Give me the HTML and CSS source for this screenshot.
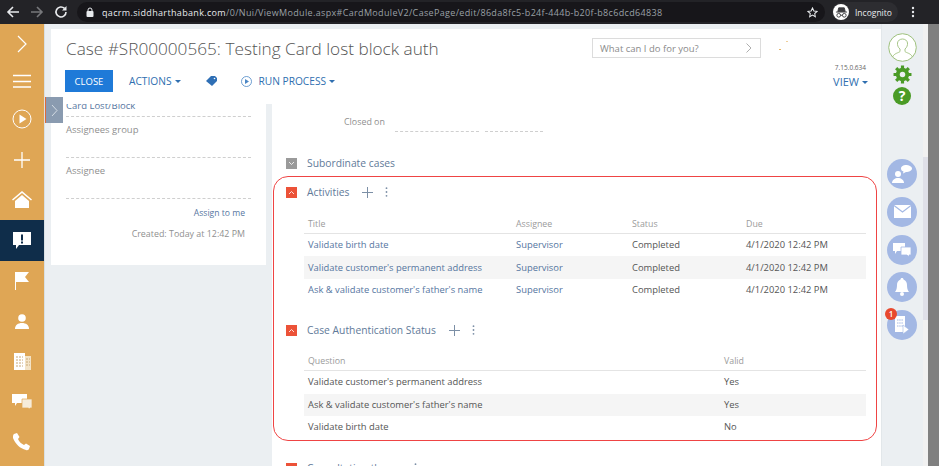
FILE: index.html
```html
<!DOCTYPE html>
<html lang="en">
<head>
    <meta charset="UTF-8">
    <meta name="viewport" content="width=device-width, initial-scale=1.0">
    <title>Case #SR00000565</title>
    <link rel="stylesheet" href="styles.css">
</head>
<body>
    <div class="browser-bar">
        <svg class="bar-icon" width="14" height="14" viewBox="0 0 14 14"><path d="M13 7H2M7 2 2 7l5 5" fill="none" stroke="#e8eaed" stroke-width="1.6"/></svg>
        <svg class="bar-icon" width="14" height="14" viewBox="0 0 14 14"><path d="M1 7h11M7 2l5 5-5 5" fill="none" stroke="#77787b" stroke-width="1.6"/></svg>
        <svg class="bar-icon" width="14" height="14" viewBox="0 0 14 14"><path d="M12 7a5 5 0 1 1-1.5-3.6" fill="none" stroke="#e8eaed" stroke-width="1.6"/><path d="M12.5 1v4.5H8z" fill="#e8eaed"/></svg>
        <div class="url-pill">
            <svg width="8" height="10" viewBox="0 0 8 10"><rect x="0.5" y="4" width="7" height="6" rx="1" fill="#e8eaed"/><path d="M2 4.5V3a2 2 0 0 1 4 0v1.5" fill="none" stroke="#e8eaed"/></svg>
            <span class="url-text"><b>qacrm.siddharthabank.com</b>/0/Nui/ViewModule.aspx#CardModuleV2/CasePage/edit/86da8fc5-b24f-444b-b20f-b8c6dcd64838</span>
            <svg class="url-star" width="11" height="11" viewBox="0 0 12 12"><path d="M6 1l1.5 3.3 3.5.4-2.6 2.4.7 3.5L6 8.8 2.9 10.6l.7-3.5L1 4.7l3.5-.4z" fill="none" stroke="#e8eaed" stroke-width="1.1"/></svg>
        </div>
        <div class="incognito">
            <span class="incognito-badge">
                <svg width="13" height="13" viewBox="0 0 14 14"><path d="M3 6l1-4h6l1 4zM1 6.5h12" fill="#3c3c40" stroke="#3c3c40"/><circle cx="4" cy="10" r="2" fill="none" stroke="#3c3c40"/><circle cx="10" cy="10" r="2" fill="none" stroke="#3c3c40"/><path d="M6 10h2" stroke="#3c3c40"/></svg>
            </span>
            <span>Incognito</span>
        </div>
        <svg class="bar-dots" width="4" height="12" viewBox="0 0 4 12"><circle cx="2" cy="2" r="1.2" fill="#e8eaed"/><circle cx="2" cy="6" r="1.2" fill="#e8eaed"/><circle cx="2" cy="10" r="1.2" fill="#e8eaed"/></svg>
    </div>

    <div class="app">
        <nav class="sidebar">
            <div class="nav-item nav-top">
                <svg width="12" height="18" viewBox="0 0 12 18"><path d="M2 1l8 8-8 8" fill="none" stroke="#fff" stroke-width="1.2"/></svg>
            </div>
            <div class="nav-item nav-menu">
                <svg width="18" height="14" viewBox="0 0 18 14"><path d="M0 1.5h18M0 7.5h18M0 13h18" stroke="#fff" stroke-width="1.3"/></svg>
            </div>
            <div class="nav-item">
                <svg width="20" height="20" viewBox="0 0 20 20"><circle cx="10" cy="10" r="9" fill="none" stroke="#fff" stroke-width="1"/><path d="M7.5 5.5l7 4.5-7 4.5z" fill="#fff"/></svg>
            </div>
            <div class="nav-item">
                <svg width="16" height="16" viewBox="0 0 16 16"><path d="M8 0v16M0 8h16" stroke="#fff" stroke-width="1.3"/></svg>
            </div>
            <div class="nav-item">
                <svg width="20" height="17" viewBox="0 0 20 17"><path d="M0 8.5 10 0l10 8.5-1 1L10 2 1 9.5z" fill="#fff"/><path d="M3 10l7-6 7 6v7H3z" fill="#fff"/></svg>
            </div>
            <div class="nav-item is-active">
                <svg width="18" height="17" viewBox="0 0 18 17"><path d="M0 0h18v13H6l-3 4v-4H0z" fill="#fff"/><path d="M8 2.5h2v6H8zM8 9.5h2v2H8z" fill="#0f2d4a"/></svg>
            </div>
            <div class="nav-item">
                <svg width="14" height="18" viewBox="0 0 14 18"><path d="M0 0h14l-4 5 4 5H1v8H0z" fill="#fff"/></svg>
            </div>
            <div class="nav-item">
                <svg width="14" height="15" viewBox="0 0 14 15"><circle cx="7" cy="4" r="3.8" fill="#fff"/><path d="M0 15c0-4 3-6 7-6s7 2 7 6z" fill="#fff"/></svg>
            </div>
            <div class="nav-item">
                <svg width="17" height="17" viewBox="0 0 17 17"><path d="M0 0h11v17H0z" fill="#fff"/><path d="M11 3h6v14h-6z" fill="#f3e3c6"/><path d="M2 4h7M2 7h7M2 10h7M2 13h7M12 6h4M12 9h4M12 12h4" stroke="#c9a877" stroke-dasharray="2 1"/></svg>
            </div>
            <div class="nav-item">
                <svg width="20" height="15" viewBox="0 0 20 15"><path d="M0 0h15v9H5l-2 3V9H0z" fill="#fff"/><path d="M10 5h10v9h-2v1l-2-1h-6z" fill="#f6ecda" stroke="#dfa655" stroke-width=".7"/></svg>
            </div>
            <div class="nav-item">
                <svg width="18" height="18" viewBox="0 0 18 18"><path d="M1 1l3-1 2.5 4-1.5 2c1 2.5 3 4.5 6 6l2-1.5 4 2.5-1 3c-.5 1-1.5 1.500-3 1C7 15.5 2.5 11 0 5c-.3-2 .2-3.300 1-4z" fill="#fff"/></svg>
            </div>
        </nav>

        <div class="main">
            <header class="page-head">
                <div class="title-row">
                    <h1 class="page-title">Case #SR00000565: Testing Card lost block auth</h1>
                    <div class="search-box">
                        <span>What can I do for you?</span>
                        <svg width="6" height="10" viewBox="0 0 6 10"><path d="M.5.5 5 5 .5 9.5" fill="none" stroke="#999" stroke-width=".8"/></svg>
                    </div>
                    <div class="spark"></div>
                </div>
                <div class="action-row">
                    <button class="btn-close">CLOSE</button>
                    <span class="action-link action-actions">ACTIONS<i class="caret"></i></span>
                    <svg class="tag-icon" width="11" height="10" viewBox="0 0 11 10"><path d="M0 5 5 0h4l2 2v3L6 10z" fill="#2f6fb5"/><circle cx="8.5" cy="2.5" r=".8" fill="#fff"/></svg>
                    <svg class="play-icon" width="11" height="11" viewBox="0 0 11 11"><circle cx="5.5" cy="5.5" r="5" fill="none" stroke="#4a86c5" stroke-width=".8"/><path d="M4 3l4 2.5L4 8z" fill="#4a86c5"/></svg>
                    <span class="action-link">RUN PROCESS<i class="caret"></i></span>
                    <div class="view-block">
                        <span class="version">7.15.0.634</span>
                        <span class="action-link view-link">VIEW<i class="caret"></i></span>
                    </div>
                </div>
            </header>

            <div class="content">
                <aside class="side-panel">
                    <div class="side-field side-first"><a class="link">Card Lost/Block</a></div>
                    <div class="side-field"><span class="label">Assignees group</span></div>
                    <div class="side-field"><span class="label">Assignee</span></div>
                    <a class="link assign-link">Assign to me</a>
                    <span class="created">Created: Today at 12:42 PM</span>
                </aside>

                <section class="record">
                    <div class="closed-row">
                        <span class="label">Closed on</span>
                        <span class="date-line date-long"></span>
                        <span class="date-line date-short"></span>
                    </div>
                    <div class="detail-head sub-head">
                        <span class="toggle is-grey"><svg width="7" height="5" viewBox="0 0 7 5"><path d="M1 1l2.5 2.5L6 1" fill="none" stroke="#fff" stroke-width=".8"/></svg></span>
                        <span class="detail-title">Subordinate cases</span>
                    </div>

                    <div class="marked-box">
                        <div class="detail-head">
                            <span class="toggle"><svg width="7" height="5" viewBox="0 0 7 5"><path d="M1 4l2.5-2.5L6 4" fill="none" stroke="#fff" stroke-width=".8"/></svg></span>
                            <span class="detail-title">Activities</span>
                            <svg class="add-icon" width="11" height="11" viewBox="0 0 11 11"><path d="M5.5 0v11M0 5.5h11" stroke="#7c8fa6"/></svg>
                            <svg class="more-icon" width="3" height="10" viewBox="0 0 3 10"><circle cx="1.5" cy="1.2" r=".9" fill="#7c8fa6"/><circle cx="1.5" cy="5" r=".9" fill="#7c8fa6"/><circle cx="1.5" cy="8.8" r=".9" fill="#7c8fa6"/></svg>
                        </div>
                        <div class="grid grid-activities">
                            <div class="grid-row grid-header"><span>Title</span><span>Assignee</span><span>Status</span><span>Due</span></div>
                            <div class="grid-row"><a class="link">Validate birth date</a><a class="link">Supervisor</a><span>Completed</span><span>4/1/2020 12:42 PM</span></div>
                            <div class="grid-row"><a class="link">Validate customer's permanent address</a><a class="link">Supervisor</a><span>Completed</span><span>4/1/2020 12:42 PM</span></div>
                            <div class="grid-row"><a class="link">Ask &amp; validate customer's father's name</a><a class="link">Supervisor</a><span>Completed</span><span>4/1/2020 12:42 PM</span></div>
                        </div>

                        <div class="detail-head auth-head">
                            <span class="toggle"><svg width="7" height="5" viewBox="0 0 7 5"><path d="M1 4l2.5-2.5L6 4" fill="none" stroke="#fff" stroke-width=".8"/></svg></span>
                            <span class="detail-title">Case Authentication Status</span>
                            <svg class="add-icon" width="11" height="11" viewBox="0 0 11 11"><path d="M5.5 0v11M0 5.5h11" stroke="#7c8fa6"/></svg>
                            <svg class="more-icon" width="3" height="10" viewBox="0 0 3 10"><circle cx="1.5" cy="1.2" r=".9" fill="#7c8fa6"/><circle cx="1.5" cy="5" r=".9" fill="#7c8fa6"/><circle cx="1.5" cy="8.8" r=".9" fill="#7c8fa6"/></svg>
                        </div>
                        <div class="grid grid-auth">
                            <div class="grid-row grid-header"><span>Question</span><span>Valid</span></div>
                            <div class="grid-row"><span>Validate customer's permanent address</span><span>Yes</span></div>
                            <div class="grid-row"><span>Ask &amp; validate customer's father's name</span><span>Yes</span></div>
                            <div class="grid-row"><span>Validate birth date</span><span>No</span></div>
                        </div>
                    </div>

                    <div class="detail-head consult-head">
                        <span class="toggle"></span>
                        <span class="detail-title">Consultation theme</span>
                        <svg class="more-icon" width="3" height="10" viewBox="0 0 3 10"><circle cx="1.5" cy="1.2" r=".9" fill="#7c8fa6"/><circle cx="1.5" cy="5" r=".9" fill="#7c8fa6"/></svg>
                    </div>
                </section>
            </div>

            <div class="panel-tab">
                <svg width="7" height="13" viewBox="0 0 7 13"><path d="M1 1l5 5.5L1 12" fill="none" stroke="#e6ebf0" stroke-width=".8"/></svg>
            </div>
        </div>

        <aside class="rail">
            <div class="rail-top">
                <svg width="29" height="29" viewBox="0 0 29 29"><circle cx="14.5" cy="14.5" r="13.8" fill="#fff" stroke="#9dc07c"/><path d="M4.5 24c2-4 6-4 7.5-5.5v-2.5c-2-1.5-2.700-4-2.500-6 .3-2.500 2.500-4 5-4s4.700 1.500 5 4c.2 2-.5 4.500-2.500 6v2.500c1.500 1.500 5.500 1.500 7.500 5.500" fill="none" stroke="#9dc07c" stroke-width=".9"/></svg>
                <svg class="gear" width="19" height="19" viewBox="0 0 18 18"><circle cx="9" cy="9" r="4.5" fill="none" stroke="#4a9b26" stroke-width="3.6"/><path d="M9 .5v17M.5 9h17M3 3l12 12M15 3 3 15" stroke="#4a9b26" stroke-width="3"/><circle cx="9" cy="9" r="2.6" fill="#ebeff2"/></svg>
                <span class="help">?</span>
            </div>
            <div class="rail-actions">
                <span class="rail-btn">
                    <svg width="20" height="19" viewBox="0 0 20 19"><circle cx="6" cy="9" r="3" fill="#fff"/><path d="M0 18c0-3 3-5 6-5s6 2 6 5z" fill="#fff"/><path d="M9 3.5C9 1.5 11.5 0 14 0s6 1.5 6 3.5S17 7 14 7l-3 1.5.5-2C10 6 9 5 9 3.5z" fill="#fff"/></svg>
                </span>
                <span class="rail-btn">
                    <svg width="17" height="13" viewBox="0 0 17 13"><rect width="17" height="13" fill="#fff"/><path d="M0 .5 8.5 7 17 .5" fill="none" stroke="#a3b8e4" stroke-width="1.2"/></svg>
                </span>
                <span class="rail-btn">
                    <svg width="18" height="14" viewBox="0 0 18 14"><path d="M0 0h12v8H4l-2 3V8H0z" fill="#fff"/><path d="M8 4h10v8h-2v2l-2-2H8z" fill="#fff" stroke="#a3b8e4" stroke-width=".8"/></svg>
                </span>
                <span class="rail-btn">
                    <svg width="14" height="18" viewBox="0 0 14 18"><path d="M7 0c1 0 1.5.7 1.5 1.5C11 2.5 12 4.500 12 7c0 3 .5 5 2 7H0c1.500-2 2-4 2-7 0-2.500 1-4.500 3.500-5.500C5.500.7 6 0 7 0z" fill="#fff"/><circle cx="7" cy="16" r="2" fill="#fff"/></svg>
                </span>
                <span class="rail-btn">
                    <svg width="14" height="18" viewBox="0 0 14 18"><path d="M0 0h10v16H0z" fill="#fff"/><path d="M2 4h6M2 7h6M2 10h6" stroke="#a3b8e4" stroke-dasharray="1.5 .7"/><path d="M8 9l6 4.5L8 18z" fill="#fff" stroke="#a3b8e4" stroke-width=".6"/></svg>
                    <span class="badge">1</span>
                </span>
            </div>
        </aside>

        <div class="scroll-track"><div class="scroll-thumb"></div></div>
        <div class="gutter"></div>
    </div>
</body>
</html>
```

FILE: styles.css
```css
* {
    margin: 0;
    padding: 0;
    box-sizing: border-box;
    font-family: 'Open Sans', 'Liberation Sans', sans-serif;
}

body {
    width: 939px;
    height: 466px;
    overflow: hidden;
    background-color: #ebeff2;
}

/* browser chrome */
.browser-bar {
    height: 24px;
    background-color: #232327;
    display: flex;
    align-items: center;
    padding-left: 6px;
    gap: 6px;
    color: #e8eaed;
}

.bar-icon {
    flex: none;
}

.bar-icon + .bar-icon {
    margin-left: 4px;
}

.url-pill {
    margin-left: 3px;
    width: 748px;
    height: 20px;
    border-radius: 10px;
    background-color: #17161a;
    display: flex;
    align-items: center;
    padding-left: 9px;
    gap: 8px;
    font-size: 9px;
}

.url-text {
    color: #9aa0a6;
    letter-spacing: 0.34px;
    white-space: nowrap;
}

.url-text b {
    color: #e8eaed;
    font-weight: 400;
}

.url-star {
    margin-left: auto;
    margin-right: 7px;
}

.incognito {
    margin-left: 1px;
    width: 66px;
    height: 20px;
    padding-left: 1px;
    border-radius: 10px;
    background-color: #2d2d31;
    display: flex;
    align-items: center;
    gap: 6px;
    font-size: 8.5px;
}

.incognito-badge {
    width: 16px;
    height: 16px;
    border-radius: 50%;
    background-color: #fff;
    display: flex;
    align-items: center;
    justify-content: center;
}

.bar-dots {
    margin-left: 7px;
}

/* app frame */
.app {
    height: 442px;
    display: flex;
}

.sidebar {
    width: 45px;
    flex: none;
    background-color: #dfa655;
    border-right: 1px solid #d9e0e3;
}

.nav-item {
    height: 40.4px;
    display: flex;
    align-items: center;
    justify-content: center;
}

.nav-top {
    height: 39px;
}

.nav-menu {
    height: 36px;
}

.is-active {
    background-color: #0f2d4a;
}

.main {
    position: relative;
    width: 836px;
    flex: none;
    padding: 5px 0 0 6px;
    background-color: #ebeff2;
}

.page-head {
    height: 75px;
    background-color: #fff;
    padding-left: 14px;
}

.title-row {
    height: 36px;
    display: flex;
    align-items: flex-end;
    position: relative;
}

.page-title {
    width: 527px;
    margin-bottom: 3px;
    padding-left: 1px;
    font-size: 17.2px;
    font-weight: 300;
    color: #555;
    line-height: 26px;
    white-space: nowrap;
}

.search-box {
    width: 169px;
    height: 20px;
    margin-bottom: 7px;
    border: 1px solid #dcdcdc;
    display: flex;
    align-items: center;
    justify-content: space-between;
    padding: 0 8px 0 7px;
    font-size: 9.5px;
    color: #8a8a8a;
}

.spark {
    position: absolute;
    left: 714px;
    top: 20px;
    width: 2px;
    height: 1px;
    background-color: #e7b466;
    box-shadow: 7px -8px 0 #f0cf9a;
}

.action-row {
    display: flex;
    align-items: center;
    height: 22px;
    margin-top: 5px;
    padding-right: 13px;
}

.btn-close {
    width: 48px;
    height: 22px;
    border: none;
    background-color: #1f7ad8;
    color: #fff;
    font-size: 9.5px;
}

.action-link {
    color: #2f6fb0;
    font-size: 10.2px;
    white-space: nowrap;
}

.action-actions {
    margin-left: 16px;
}

.caret {
    display: inline-block;
    margin-left: 3px;
    vertical-align: 2px;
    border-left: 3.5px solid transparent;
    border-right: 3.5px solid transparent;
    border-top: 3.5px solid #2f6fb0;
}

.tag-icon {
    margin-left: 25px;
}

.play-icon {
    margin-left: 24px;
    margin-right: 7px;
}

.view-block {
    margin-left: auto;
    position: relative;
    display: flex;
    align-items: center;
}

.version {
    position: absolute;
    right: 2px;
    top: -11px;
    font-size: 6.5px;
    color: #666;
    white-space: nowrap;
}

.view-link {
    font-size: 11px;
}

.content {
    display: flex;
    gap: 6px;
    height: 362px;
}

.side-panel {
    width: 215px;
    height: 161px;
    background-color: #fff;
    overflow: hidden;
    padding: 0 15px;
    display: flex;
    flex-direction: column;
    font-size: 9.5px;
}

.side-field {
    height: 41px;
    flex: none;
    border-bottom: 1px dashed #cfcfcf;
    padding-top: 6px;
    line-height: 14px;
}

.side-first {
    height: 13px;
    padding-top: 0;
    line-height: 10px;
}

.side-first .link {
    display: block;
    margin-top: -3px;
}

.label {
    color: #8f8f8f;
}

.link {
    color: #56769f;
}

.assign-link {
    align-self: flex-end;
    margin: 8px 6px 0 0;
    font-size: 8.6px;
    line-height: 12px;
}

.created {
    align-self: flex-end;
    margin: 9px 6px 0 0;
    font-size: 8.9px;
    color: #8f8f8f;
    line-height: 12px;
}

.record {
    width: 609px;
    height: 362px;
    background-color: #fff;
    overflow: hidden;
    font-size: 9.4px;
}

.closed-row {
    height: 28px;
    display: flex;
    align-items: flex-start;
    padding-top: 11px;
    position: relative;
}

.closed-row .label {
    margin-left: 72px;
    font-size: 8.9px;
    line-height: 13px;
}

.date-line {
    position: absolute;
    top: 27px;
    border-bottom: 1px dashed #cfcfcf;
}

.date-long {
    left: 123px;
    width: 84px;
}

.date-short {
    left: 213px;
    width: 58px;
}

.detail-head {
    display: flex;
    align-items: center;
    height: 16px;
    padding-left: 14px;
}

.sub-head {
    margin-top: 23px;
}

.toggle {
    width: 11px;
    height: 11px;
    background-color: #ec5238;
    display: flex;
    align-items: center;
    justify-content: center;
    flex: none;
}

.is-grey {
    background-color: #9a9a9a;
}

.detail-title {
    margin-left: 10px;
    color: #5f7a99;
    font-size: 10.3px;
    white-space: nowrap;
}

.add-icon {
    margin-left: 13px;
}

.more-icon {
    margin-left: 12px;
}

.marked-box {
    margin: 5px 4px 0 1px;
    height: 265px;
    border: 1.3px solid #ef4444;
    border-radius: 15px;
    padding: 7px 10px 0 12px;
}

.marked-box .detail-head {
    padding-left: 0;
}

.grid {
    margin-left: 18px;
}

.grid-activities {
    margin-top: 18px;
}

.grid-row {
    display: grid;
    height: 22.4px;
    align-items: center;
    padding: 0 0 1px 4px;
    color: #555;
}

.grid-row:nth-child(3) {
    background-color: #f5f5f5;
}

.grid-activities .grid-row {
    grid-template-columns: 208px 116px 114px 1fr;
}

.grid-auth .grid-row {
    grid-template-columns: 416px 1fr;
}

.grid-header {
    height: 16px;
    border-bottom: 1px solid #e4e4e4;
    color: #9b9b9b;
    padding-bottom: 4px;
    font-size: 8.8px;
}

.auth-head {
    margin-top: 21px;
}

.grid-auth {
    margin-top: 17px;
}

.consult-head {
    margin-top: 19px;
}

/* collapse tab over the side panel */
.panel-tab {
    position: absolute;
    left: 0;
    top: 73px;
    width: 18px;
    height: 26px;
    background-color: #8a9bb0;
    border-left: 1px solid #dd6a3c;
    display: flex;
    align-items: center;
    justify-content: center;
}

/* right rail */
.rail {
    width: 42px;
    flex: none;
    display: flex;
    flex-direction: column;
    align-items: center;
    background-color: #ebeff2;
    border-left: 1px solid #e2e7ea;
}

.rail-top {
    display: flex;
    flex-direction: column;
    align-items: center;
    margin: 9px 0 0 -1px;
}

.gear {
    margin-top: 3px;
}

.help {
    margin-top: 3px;
    width: 18px;
    height: 18px;
    border-radius: 50%;
    background-color: #4a9b26;
    color: #fff;
    font-size: 14px;
    font-weight: 700;
    line-height: 18px;
    text-align: center;
}

.rail-actions {
    margin: 54px 0 0 -1px;
    display: flex;
    flex-direction: column;
    gap: 7.8px;
}

.rail-btn {
    position: relative;
    width: 30px;
    height: 30px;
    border-radius: 50%;
    background-color: #a3b8e4;
    display: flex;
    align-items: center;
    justify-content: center;
}

.badge {
    position: absolute;
    left: -2px;
    top: -2px;
    width: 12px;
    height: 12px;
    border-radius: 50%;
    background-color: #e8492e;
    color: #fff;
    font-size: 8px;
    font-weight: 600;
    line-height: 12px;
    text-align: center;
}

.scroll-track {
    width: 5px;
    flex: none;
    background-color: #f1f1f1;
    padding-top: 133px;
}

.scroll-thumb {
    height: 163px;
    background-color: #dfe0e8;
}

.gutter {
    width: 11px;
    flex: none;
    background-color: #808080;
}
```
